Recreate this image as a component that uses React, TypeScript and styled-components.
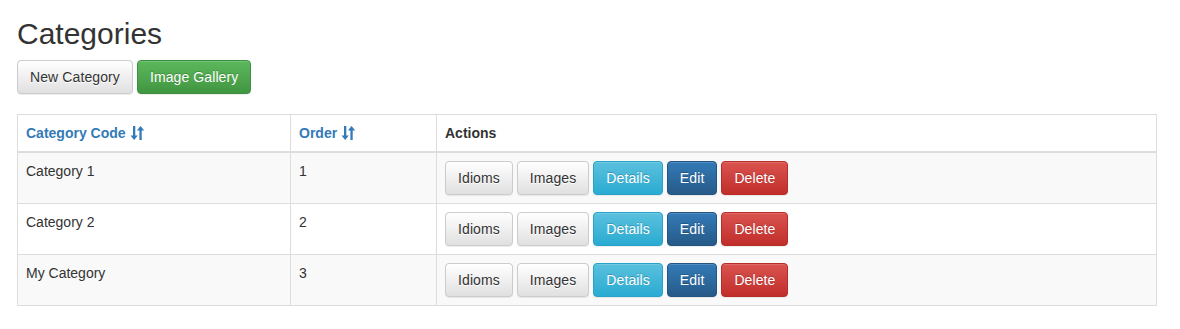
import styled, { createGlobalStyle, css } from "styled-components";

const GlobalStyle = createGlobalStyle`
  body {
    margin: 0;
    background: #fff;
    color: #333;
    font-family: "Liberation Sans", Arial, Helvetica, sans-serif;
    font-size: 14px;
    line-height: 1.42857143;
  }
  * {
    box-sizing: border-box;
  }
`;

const Page = styled.div`
  padding: 0 23px 0 17px;
`;

const Title = styled.h2`
  margin: 17px 0 10px;
  font-size: 30px;
  font-weight: 500;
  line-height: 1.1;
`;

const Toolbar = styled.div`
  display: flex;
  gap: 4px;
  margin-bottom: 20px;
`;

type Variant = "default" | "success" | "info" | "primary" | "danger";

const variants: Record<Variant, ReturnType<typeof css>> = {
  default: css`
    color: #333;
    text-shadow: 0 1px 0 #fff;
    background-image: linear-gradient(to bottom, #fff 0, #e0e0e0 100%);
    border-color: #ccc;
  `,
  success: css`
    color: #fff;
    background-image: linear-gradient(to bottom, #5cb85c 0, #419641 100%);
    border-color: #3e8f3e;
  `,
  info: css`
    color: #fff;
    background-image: linear-gradient(to bottom, #5bc0de 0, #2aabd2 100%);
    border-color: #28a4c9;
  `,
  primary: css`
    color: #fff;
    background-image: linear-gradient(to bottom, #337ab7 0, #265a88 100%);
    border-color: #245580;
  `,
  danger: css`
    color: #fff;
    background-image: linear-gradient(to bottom, #d9534f 0, #c12e2a 100%);
    border-color: #b92c28;
  `,
};

const Button = styled.button<{ $variant: Variant }>`
  display: inline-block;
  height: 34px;
  padding: 6px 12px;
  font-family: inherit;
  font-size: 14px;
  line-height: 20px;
  letter-spacing: 0.1px;
  border: 1px solid transparent;
  border-radius: 4px;
  text-shadow: 0 -1px 0 rgba(0, 0, 0, 0.2);
  box-shadow: inset 0 1px 0 rgba(255, 255, 255, 0.15),
    0 1px 1px rgba(0, 0, 0, 0.075);
  cursor: pointer;
  white-space: nowrap;
  ${({ $variant }) => variants[$variant]}
`;

const Table = styled.table`
  width: 1140px;
  border-collapse: collapse;
  border: 1px solid #ddd;
`;

const Th = styled.th<{ $width?: number }>`
  width: ${({ $width }) => ($width ? `${$width}px` : "auto")};
  padding: 8px;
  text-align: left;
  font-weight: bold;
  line-height: 20px;
  vertical-align: bottom;
  border: 1px solid #ddd;
  border-bottom-width: 2px;
`;

const SortLink = styled.a`
  color: #337ab7;
  text-decoration: none;
  display: inline-flex;
  align-items: center;
  gap: 4px;
`;

const Row = styled.tr`
  &:nth-child(odd) {
    background: #f9f9f9;
  }
`;

const Td = styled.td`
  padding: 8px;
  line-height: 20px;
  vertical-align: top;
  border: 1px solid #ddd;
`;

const Actions = styled.div`
  display: flex;
  gap: 4px;
`;

const SortIcon = () => (
  <svg width="15" height="14" viewBox="0 0 15 14" aria-hidden>
    <path d="M3 0h2.3v9.5H7.8L4.15 14 0.5 9.5H3z" fill="#337ab7" />
    <path d="M9.4 14h2.3V4.5h2.5L10.55 0 6.9 4.5h2.5z" fill="#337ab7" />
  </svg>
);

const rows = [
  { name: "Category 1", order: 1 },
  { name: "Category 2", order: 2 },
  { name: "My Category", order: 3 },
];

export default function App() {
  return (
    <>
      <GlobalStyle />
      <Page>
        <Title>Categories</Title>
        <Toolbar>
          <Button $variant="default">New Category</Button>
          <Button $variant="success">Image Gallery</Button>
        </Toolbar>
        <Table>
          <thead>
            <tr>
              <Th $width={273}>
                <SortLink href="#">
                  Category Code <SortIcon />
                </SortLink>
              </Th>
              <Th $width={146}>
                <SortLink href="#">
                  Order <SortIcon />
                </SortLink>
              </Th>
              <Th>Actions</Th>
            </tr>
          </thead>
          <tbody>
            {rows.map((r) => (
              <Row key={r.name}>
                <Td>{r.name}</Td>
                <Td>{r.order}</Td>
                <Td>
                  <Actions>
                    <Button $variant="default">Idioms</Button>
                    <Button $variant="default">Images</Button>
                    <Button $variant="info">Details</Button>
                    <Button $variant="primary">Edit</Button>
                    <Button $variant="danger">Delete</Button>
                  </Actions>
                </Td>
              </Row>
            ))}
          </tbody>
        </Table>
      </Page>
    </>
  );
}
